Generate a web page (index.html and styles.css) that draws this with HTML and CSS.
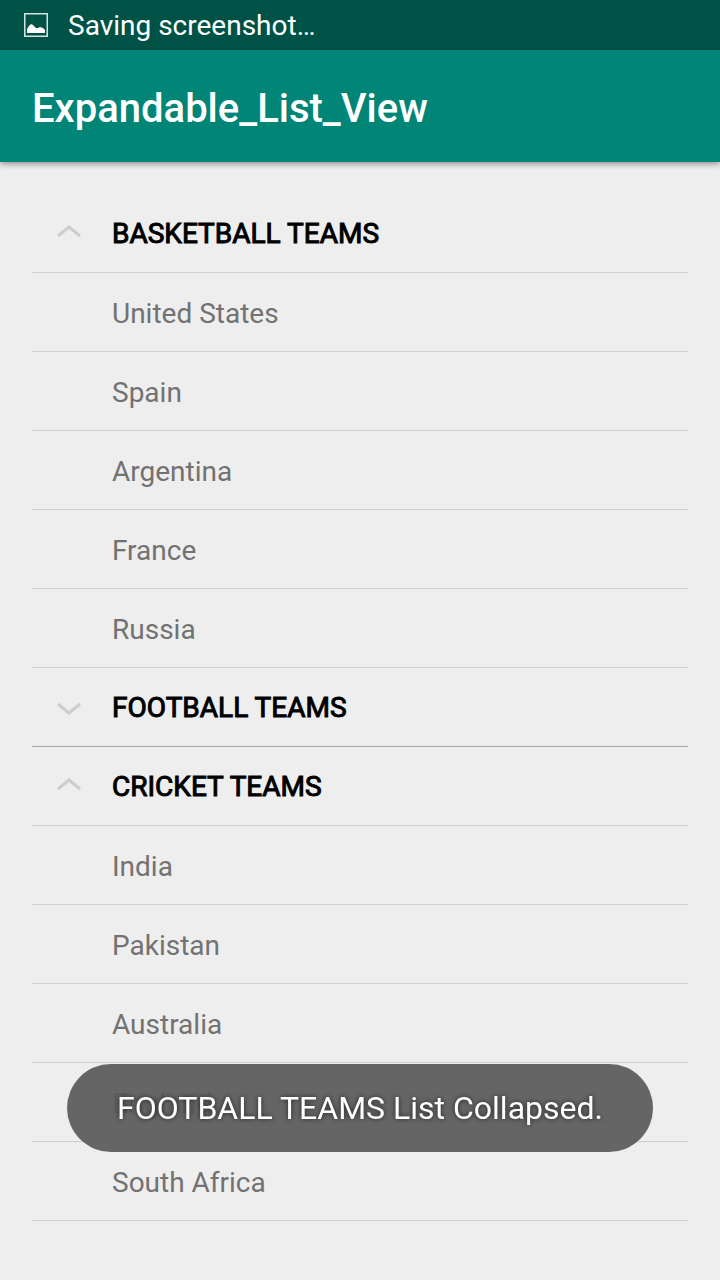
FILE: index.html
```html
<!DOCTYPE html>
<html lang="en">
<head>
<meta charset="utf-8">
<meta name="viewport" content="width=device-width, initial-scale=1">
<title>Expandable_List_View</title>
<link rel="stylesheet" href="styles.css">
</head>
<body>
<div class="status-bar">
  <svg class="status-icon" viewBox="0 0 24 24" aria-hidden="true">
    <rect x="0.75" y="0.75" width="22.5" height="22.5" fill="none" stroke="#d5e3e0" stroke-width="1.5"/>
    <path d="M3 20v-4l2-3 2-2 2 1 3 3 2 0 2-1 3 1 2 2v3z" fill="#fff"/>
  </svg>
  <span>Saving screenshot…</span>
</div>
<header class="app-bar">
  <h1 class="app-title">Expandable_List_View</h1>
</header>
<main class="list">
  <section>
    <h2 class="group">
      <button class="group-button" type="button" aria-expanded="true">
        <svg class="chevron" viewBox="0 0 24 16" aria-hidden="true"><path d="M1 11L12 2l11 9"/></svg>
        <span>BASKETBALL TEAMS</span>
      </button>
    </h2>
    <ul class="children">
      <li class="child">United States</li>
      <li class="child">Spain</li>
      <li class="child">Argentina</li>
      <li class="child">France</li>
      <li class="child">Russia</li>
    </ul>
  </section>
  <section>
    <h2 class="group group-collapsed">
      <button class="group-button" type="button" aria-expanded="false">
        <svg class="chevron" viewBox="0 0 24 16" aria-hidden="true"><path d="M1 5l11 9 11-9"/></svg>
        <span>FOOTBALL TEAMS</span>
      </button>
    </h2>
  </section>
  <section>
    <h2 class="group">
      <button class="group-button" type="button" aria-expanded="true">
        <svg class="chevron" viewBox="0 0 24 16" aria-hidden="true"><path d="M1 11L12 2l11 9"/></svg>
        <span>CRICKET TEAMS</span>
      </button>
    </h2>
    <ul class="children">
      <li class="child">India</li>
      <li class="child">Pakistan</li>
      <li class="child">Australia</li>
      <li class="child">England</li>
      <li class="child">South Africa</li>
    </ul>
  </section>
</main>
<div class="toast" role="status">FOOTBALL TEAMS List Collapsed.</div>
</body>
</html>
```

FILE: styles.css
```css
* {
  box-sizing: border-box;
}

body {
  margin: 0;
  background: #eee;
  font-family: Roboto, "Liberation Sans", sans-serif;
  font-size: 28px;
  line-height: 32px;
}

.status-bar {
  display: flex;
  align-items: center;
  gap: 20px;
  min-height: 50px;
  padding: 0 24px;
  background: #005247;
  color: #fff;
  line-height: 34px;
}

.status-icon {
  width: 24px;
  height: 24px;
}

.status-bar span {
  padding-top: 2px;
}

.app-bar {
  display: flex;
  align-items: center;
  min-height: 112px;
  padding: 6px 32px 0;
  background: #008577;
  box-shadow: 0 2px 6px rgba(0, 0, 0, 0.4);
}

.app-title {
  margin: 0;
  color: #fff;
  font-size: 40px;
  font-weight: 500;
  line-height: 48px;
}

.list {
  padding: 32px;
}

.group {
  margin: 0;
  border-bottom: 1px solid #cfcfcf;
  font-size: 28px;
  font-weight: 400;
}

.group-collapsed {
  border-bottom-color: #a6a6a6;
}

.group-button {
  display: flex;
  align-items: center;
  gap: 31px;
  width: 100%;
  min-height: 78px;
  padding: 0 25px;
  border: 0;
  background: none;
  color: #000;
  font: inherit;
  line-height: 32px;
  text-align: left;
  -webkit-text-stroke: 1px #000;
}

.group-button span {
  padding-top: 2px;
}

.chevron {
  width: 24px;
  height: 16px;
  fill: none;
  stroke: #cdcdcd;
  stroke-width: 3;
}

.children {
  margin: 0;
  padding: 0;
  list-style: none;
}

.child {
  padding: 25px 24px 21px 80px;
  border-bottom: 1px solid #cfcfcf;
  color: #727272;
}

.toast {
  position: fixed;
  bottom: 128px;
  left: 50%;
  transform: translateX(-50%);
  padding: 24px 50px;
  border-radius: 44px;
  background: rgba(90, 90, 90, 0.93);
  color: #fff;
  font-size: 32px;
  line-height: 40px;
  text-shadow: 0 0 5px rgba(0, 0, 0, 0.7);
  white-space: nowrap;
}
```
